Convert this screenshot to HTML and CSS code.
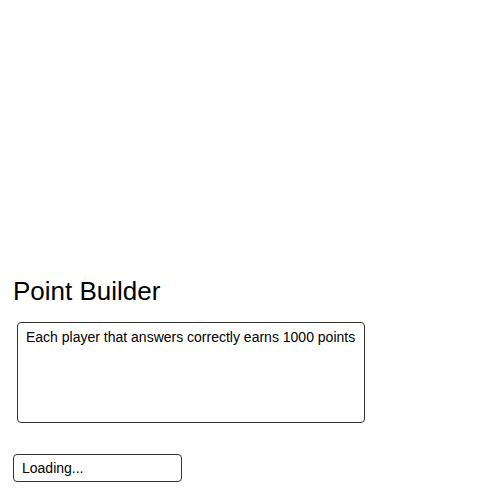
FILE: index.html
```html
<!DOCTYPE html>
<html>
<head>
<meta charset="utf-8">
<link rel="stylesheet" href="styles.css">
</head>
<body>
<div class="page">
  <div class="spacer"></div>
  <h1 class="title">Point Builder</h1>
  <div class="desc">Each player that answers correctly earns 1000 points</div>
  <div class="status">Loading...</div>
</div>
</body>
</html>
```

FILE: styles.css
```css
html, body {
  margin: 0;
  padding: 0;
  background: #fff;
}
.page {
  font-family: "Liberation Sans", Arial, sans-serif;
  color: #000;
  padding-left: 13px;
  display: flex;
  flex-direction: column;
  align-items: flex-start;
}
.spacer {
  height: 274px;
}
.title {
  margin: 0;
  font-size: 26px;
  font-weight: normal;
  line-height: 34px;
}
.desc {
  box-sizing: border-box;
  margin: 14px 0 0 4px;
  width: 348px;
  height: 101px;
  border: 1px solid #333;
  border-radius: 4px;
  padding: 5px 8px;
  font-size: 14px;
  line-height: 18px;
}
.status {
  box-sizing: border-box;
  margin-top: 31px;
  width: 169px;
  height: 28px;
  border: 1px solid #333;
  border-radius: 4px;
  padding: 0 8px;
  font-size: 14px;
  line-height: 26px;
}
```
